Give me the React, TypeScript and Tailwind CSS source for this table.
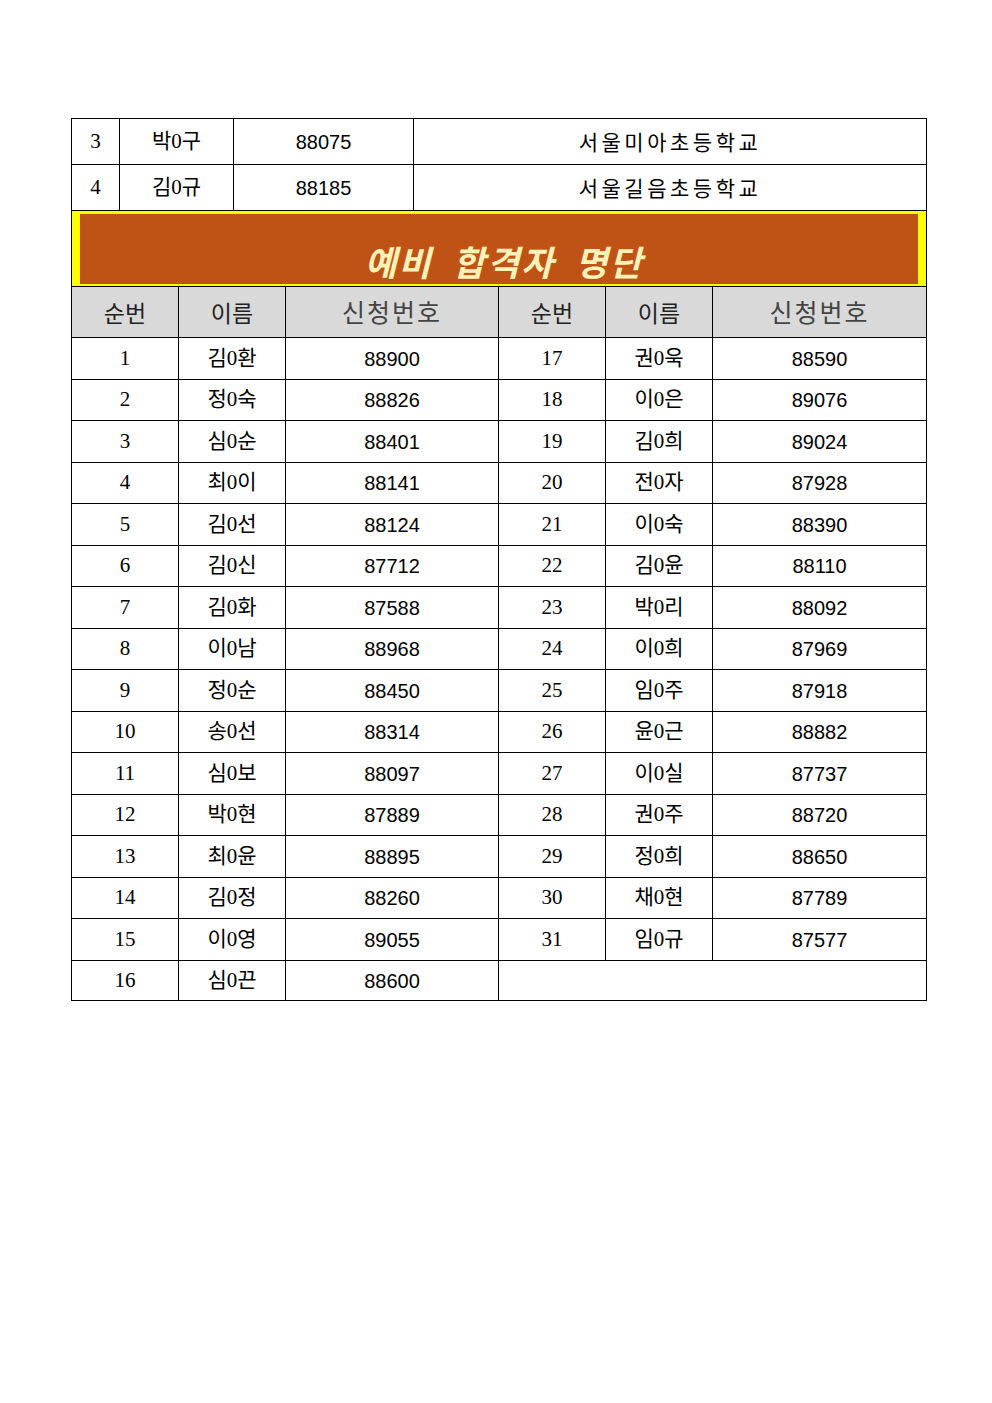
import React from "react";

const left = [
  [1, "김0환", "88900"], [2, "정0숙", "88826"], [3, "심0순", "88401"], [4, "최0이", "88141"],
  [5, "김0선", "88124"], [6, "김0신", "87712"], [7, "김0화", "87588"], [8, "이0남", "88968"],
  [9, "정0순", "88450"], [10, "송0선", "88314"], [11, "심0보", "88097"], [12, "박0현", "87889"],
  [13, "최0윤", "88895"], [14, "김0정", "88260"], [15, "이0영", "89055"], [16, "심0끈", "88600"],
];
const right = [
  [17, "권0욱", "88590"], [18, "이0은", "89076"], [19, "김0희", "89024"], [20, "전0자", "87928"],
  [21, "이0숙", "88390"], [22, "김0윤", "88110"], [23, "박0리", "88092"], [24, "이0희", "87969"],
  [25, "임0주", "87918"], [26, "윤0근", "88882"], [27, "이0실", "87737"], [28, "권0주", "88720"],
  [29, "정0희", "88650"], [30, "채0현", "87789"], [31, "임0규", "87577"],
];

const serif = { fontFamily: '"Liberation Serif", "Noto Sans CJK KR", serif' };
const sans = { fontFamily: '"Liberation Sans", "Noto Sans CJK KR", sans-serif' };
const kr = { fontFamily: '"Noto Sans CJK KR", sans-serif' };

const heights = [42, 41, 42, 41, 42, 41, 42, 41, 42, 41, 42, 41, 42, 41, 42, 40];

export default function App() {
  return (
    <div className="w-[992px] h-[1403px] bg-white">
      <div className="pt-[118px] pl-[71px]">
        <div className="w-[856px] border-l border-t border-black text-black">
          {[
            [3, "박0구", "88075", "서울미아초등학교"],
            [4, "김0규", "88185", "서울길음초등학교"],
          ].map((r) => (
            <div key={r[0]} className="flex h-[46px] border-b border-black">
              <div className="w-[48px] border-r border-black flex items-center justify-center text-[21px]" style={serif}>{r[0]}</div>
              <div className="w-[114px] border-r border-black flex items-center justify-center text-[21px]" style={serif}>{r[1]}</div>
              <div className="w-[180px] border-r border-black flex items-center justify-center text-[20px]" style={sans}>{r[2]}</div>
              <div className="w-[513px] border-r border-black flex items-center justify-center text-[21px] tracking-[3.5px]" style={kr}>{r[3]}</div>
            </div>
          ))}
          <div className="h-[76px] border-b border-r border-black bg-[#ffff00] pl-[8px] pr-[8px] pt-[3px] pb-[2px]">
            <div className="h-full bg-[#bf5316] flex items-end justify-center pl-[10px]">
              <span className="text-[35px] font-bold italic text-[#fff1b8] leading-[46px] tracking-[2px]" style={kr}>
                예비&nbsp; 합격자&nbsp; 명단
              </span>
            </div>
          </div>
          <div className="flex h-[51px] border-b border-black bg-[#d9d9d9] text-[#222]" style={kr}>
            <div className="w-[107px] border-r border-black flex items-center justify-center text-[23px]">순번</div>
            <div className="w-[107px] border-r border-black flex items-center justify-center text-[23px]">이름</div>
            <div className="w-[213px] border-r border-black flex items-center justify-center text-[25px] tracking-[2px] text-[#444]">신청번호</div>
            <div className="w-[107px] border-r border-black flex items-center justify-center text-[23px]">순번</div>
            <div className="w-[107px] border-r border-black flex items-center justify-center text-[23px]">이름</div>
            <div className="w-[214px] border-r border-black flex items-center justify-center text-[25px] tracking-[2px] text-[#444]">신청번호</div>
          </div>
          {left.map((l, i) => {
            const r = right[i];
            return (
              <div key={i} className="flex border-b border-black" style={{ height: heights[i] }}>
                <div className="w-[107px] border-r border-black flex items-center justify-center text-[21px]" style={serif}>{l[0]}</div>
                <div className="w-[107px] border-r border-black flex items-center justify-center text-[21px]" style={serif}>{l[1]}</div>
                <div className="w-[213px] border-r border-black flex items-center justify-center text-[20px]" style={sans}>{l[2]}</div>
                {r ? (
                  <>
                    <div className="w-[107px] border-r border-black flex items-center justify-center text-[21px]" style={serif}>{r[0]}</div>
                    <div className="w-[107px] border-r border-black flex items-center justify-center text-[21px]" style={serif}>{r[1]}</div>
                    <div className="w-[214px] border-r border-black flex items-center justify-center text-[20px]" style={sans}>{r[2]}</div>
                  </>
                ) : (
                  <div className="w-[428px] border-r border-black"></div>
                )}
              </div>
            );
          })}
        </div>
      </div>
    </div>
  );
}
